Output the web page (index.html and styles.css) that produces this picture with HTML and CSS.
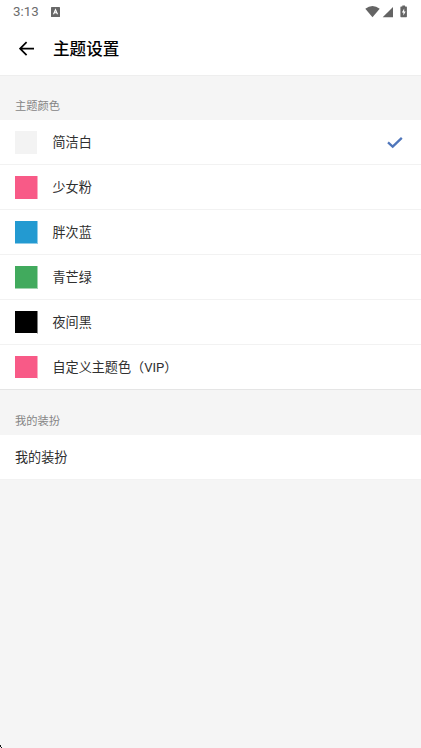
FILE: index.html
```
<!DOCTYPE html>
<html lang="zh-CN">
<head>
<meta charset="utf-8">
<title>主题设置</title>
<link rel="stylesheet" href="styles.css">
</head>
<body>
<div class="status">
  <span class="time">3:13</span>
  <svg class="app" width="9" height="10" viewBox="0 0 9 10"><rect width="9" height="10" rx="0.6" fill="#686868"/><path d="M2.5 7.3 4.5 2.7 6.5 7.3M3.2 5.7h2.6" fill="none" stroke="#fff" stroke-width="1.1"/></svg>
  <svg class="signals" width="44" height="14" viewBox="0 0 44 14" fill="#646464"><path d="M0.3 3.8Q7.5-1.8 14.7 3.8L7.5 12.2Z"/><path d="M17.7 12.2H28V1.9Z"/><path d="M36 1.6h1.3V.5h2.7v1.1h1.3q.6 0 .6.6v9.4q0 .6-.6.6h-5.3q-.6 0-.6-.6V2.2q0-.6.6-.6Z"/><path d="M39.2 3.5 36.9 7.5h1.5v3l2.3-4.1h-1.5Z" fill="#fff"/></svg>
</div>
<header class="bar">
  <svg width="16" height="16" viewBox="0 0 16 16" fill="none" stroke="#000" stroke-width="1.7"><path d="M15 7.7H1.2M7.6 1.2 1.1 7.7l6.5 6.5"/></svg>
  <h1>主题设置</h1>
</header>
<main>
  <h2>主题颜色</h2>
  <ul>
    <li><i class="swatch white"></i><span>简洁白</span><svg class="check" width="16" height="12" viewBox="0 0 16 12"><path d="M1 5.4 5.7 9.6 14.8 0.9" fill="none" stroke="#4f76bb" stroke-width="2.3"/></svg></li>
    <li><i class="swatch pink"></i><span>少女粉</span></li>
    <li><i class="swatch blue"></i><span>胖次蓝</span></li>
    <li><i class="swatch green"></i><span>青芒绿</span></li>
    <li><i class="swatch black"></i><span>夜间黑</span></li>
    <li><i class="swatch pink short"></i><span>自定义主题色（VIP）</span></li>
  </ul>
  <h2>我的装扮</h2>
  <ul>
    <li><span>我的装扮</span></li>
  </ul>
</main>
<i class="corner"></i>
</body>
</html>
```
FILE: styles.css
```
* { box-sizing: border-box; }
body {
  margin: 0;
  height: 748px;
  overflow: hidden;
  background: #f5f5f5;
  color: #303030;
  font-family: Roboto, "Noto Sans CJK SC", sans-serif;
}
svg { display: block; flex: none; }
.status {
  display: flex;
  align-items: center;
  height: 23px;
  padding: 0 12px 0 13px;
  background: #fff;
}
.time { width: 38px; font-size: 13.3px; color: #6c6c6c; }
.signals { margin-left: auto; }
.bar {
  display: flex;
  align-items: center;
  gap: 18px;
  height: 53px;
  padding: 0 19px;
  background: #fff;
  border-bottom: 1px solid #eee;
}
h1 { margin: 0; padding-top: 2px; font-size: 16.6px; line-height: 24px; font-weight: 500; color: #000; }
h2 {
  margin: 0;
  height: 45px;
  padding: 20px 15px 0;
  font-size: 11.25px;
  line-height: 23px;
  font-weight: 400;
  color: #858585;
}
.bar + main h2:first-child { height: 44px; padding-top: 19px; }
ul { margin: 0; padding: 0; list-style: none; }
li {
  display: flex;
  align-items: center;
  height: 45px;
  padding: 1px 18px 0 15px;
  background: #fff;
  border-bottom: 1px solid #f2f2f2;
  font-size: 13.1px;
}
li span { padding-bottom: 2px; }
li:last-child { border-color: #e5e5e5; }
li:only-child { border-color: #f2f2f2; }
.swatch {
  width: 23px;
  height: 23px;
  margin-right: 14.5px;
  border: 0 solid transparent;
  border-right-width: 1px;
  background-clip: padding-box;
}
.white { background-color: #f3f3f3; }
.pink { background-color: #f85a87; border-right-color: #f85a8780; }
.blue { background-color: #239ad1; border-right-color: #239ad180; }
.green { background-color: #41aa5d; border-right-color: #41aa5d80; }
.black { background-color: #000; border-right-color: #00000080; }
.blue { border-bottom: 1px solid #239ad180; }
.green { border-bottom: 1px solid #41aa5d80; }
.black, .short { border-bottom: 1px solid transparent; }
.check { margin-left: auto; }
.corner {
  position: absolute;
  left: 0;
  bottom: 0;
  width: 2px;
  height: 3px;
  background: #111;
  clip-path: polygon(0 0, 50% 0, 50% 67%, 100% 67%, 100% 100%, 50% 100%, 50% 67%, 0 67%);
}
```
